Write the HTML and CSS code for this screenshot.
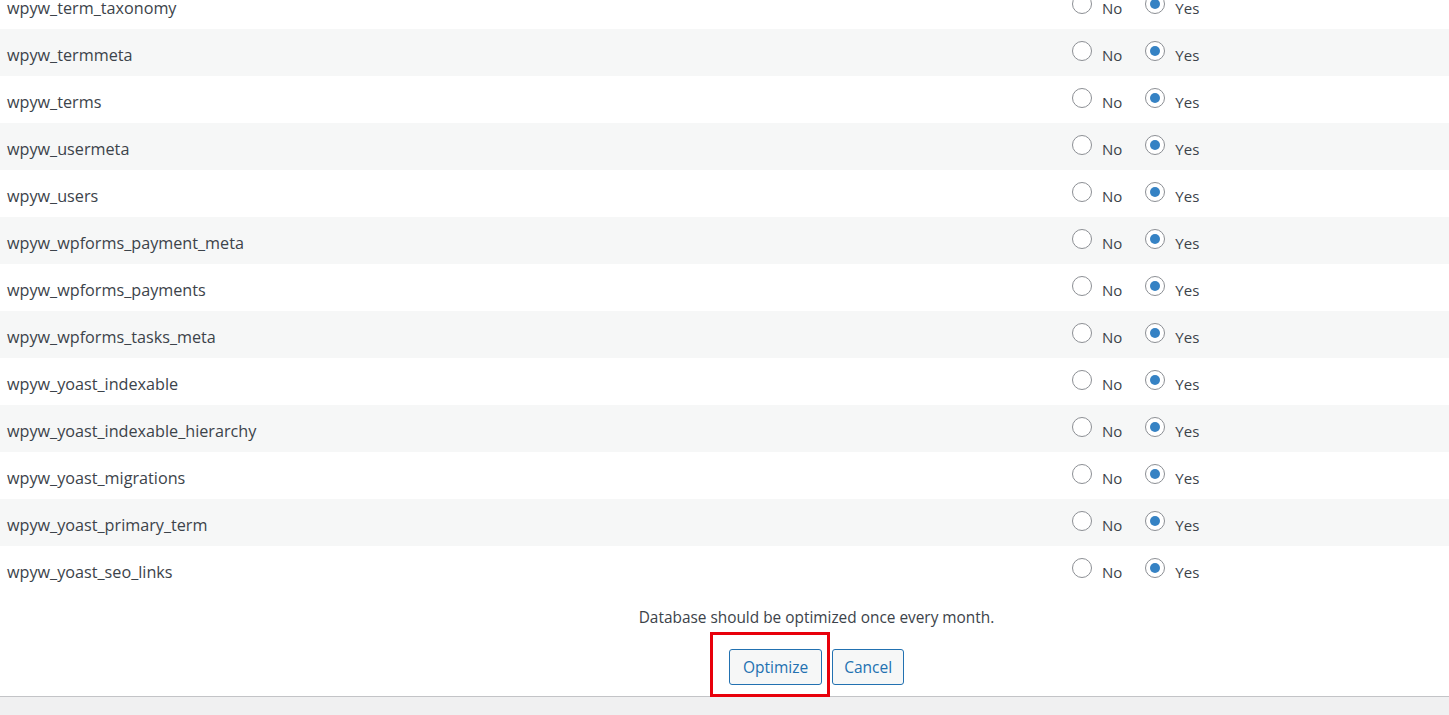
FILE: index.html
```html
<!DOCTYPE html>
<html>
<head>
  <title>Optimize database</title>
  <link rel="stylesheet" href="styles.css">
</head>
<body>
<div class="panel">
  <div class="tables" id="tables"></div>

  <div class="bottom">
    <p class="note">Database should be optimized once every month.</p>
    <div class="actions">
      <span class="highlight"><button class="btn">Optimize</button></span>
      <button class="btn cancel">Cancel</button>
    </div>
  </div>
</div>
<div class="footer"></div>

<script>
var names = [
  'wpyw_term_taxonomy', 'wpyw_termmeta', 'wpyw_terms', 'wpyw_usermeta',
  'wpyw_users', 'wpyw_wpforms_payment_meta', 'wpyw_wpforms_payments',
  'wpyw_wpforms_tasks_meta', 'wpyw_yoast_indexable',
  'wpyw_yoast_indexable_hierarchy', 'wpyw_yoast_migrations',
  'wpyw_yoast_primary_term', 'wpyw_yoast_seo_links'
];
var box = document.getElementById('tables');
names.forEach(function(name, i) {
  var row = document.createElement('div');
  row.className = 'row' + (i % 2 ? ' odd' : '');
  row.innerHTML =
    '<div class="name">' + name + '</div>' +
    '<div class="opts">' +
      '<label class="opt"><span class="radio"></span><span class="lbl">No</span></label>' +
      '<label class="opt"><span class="radio on"></span><span class="lbl">Yes</span></label>' +
    '</div>';
  box.appendChild(row);
});
</script>
</body>
</html>
```

FILE: styles.css
```css
body {
  margin: 0;
  background: #f0f0f1;
  font-family: "Open Sans", "Noto Sans", sans-serif;
  color: #3c434a;
}
.panel {
  display: flow-root;
  background: #fff;
  border-bottom: 1px solid #c3c4c7;
  height: 696px;
  box-sizing: border-box;
  height: 697px;
}
.tables {
  margin-top: -18px;
}
.row {
  display: flex;
  align-items: center;
  height: 47px;
  background: #fff;
}
.row.odd {
  background: #f6f7f7;
}
.name {
  flex: 1;
  padding-left: 7px;
  padding-top: 4px;
  font-size: 16.2px;
}
.opts {
  width: 377px;
  display: flex;
  align-items: center;
}
.opt {
  display: flex;
  align-items: center;
  margin-right: 23px;
}
.radio {
  width: 18px;
  height: 18px;
  margin-bottom: 3px;
  border: 1px solid #8c8f94;
  border-radius: 50%;
  background: #fff;
  position: relative;
}
.radio.on::after {
  content: "";
  position: absolute;
  left: 4px;
  top: 4px;
  width: 10px;
  height: 10px;
  border-radius: 50%;
  background: #3582c4;
}
.lbl {
  margin-left: 10px;
  padding-top: 5px;
  font-size: 15px;
}
.bottom {
  padding-left: 184px;
}
.note {
  margin: 14px 0 0;
  line-height: 22px;
  text-align: center;
  font-size: 15.4px;
}
.actions {
  display: flex;
  justify-content: center;
  gap: 10px;
  margin-top: 20px;
}
.highlight {
  position: relative;
  display: flex;
}
.highlight::after {
  content: "";
  position: absolute;
  left: -19px;
  top: -17px;
  width: 114px;
  height: 59px;
  border: 3px solid #e8000b;
}
.btn {
  font-family: "Open Sans", "Noto Sans", sans-serif;
  font-size: 15.5px;
  color: #2271b1;
  background: #f6f7f7;
  border: 1px solid #2271b1;
  border-radius: 3px;
  height: 36px;
  padding: 0 13px;
}
.btn.cancel {
  padding: 0 11px;
}
.footer {
  height: 20px;
}
```
